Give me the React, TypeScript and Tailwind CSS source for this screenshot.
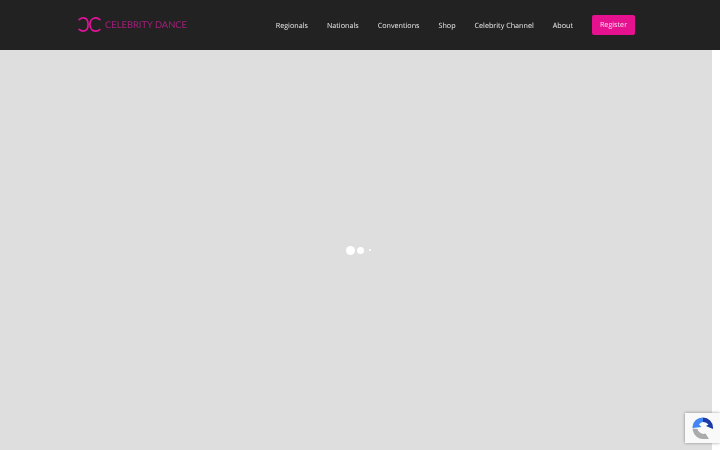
import React from 'react';

const navItems = ['Regionals', 'Nationals', 'Conventions', 'Shop', 'Celebrity Channel', 'About'];

const LogoMark = () => (
    <svg width="25" height="15" viewBox="0 0 25 16" fill="none" stroke="#e0149a" strokeWidth="1.8" strokeLinecap="round">
        <path d="M1.5 2.8C3 1.500 4.600.9 6 1c2.900.2 5 3 5 7s-2.100 6.800-5 7c-1.400.1-3-.5-4.500-1.800" />
        <path d="M23.500 2.800C22 1.500 20.400.8 18.800.9 15.400 1.100 13 4 13 8s2.400 6.900 5.800 7.100c1.600.1 3.200-.5 4.700-1.700" />
    </svg>
);

// reCAPTCHA mark: three arrows round a ring
const RecaptchaIcon = () => (
    <svg width="22" height="24" viewBox="0 0 22 24" fill="none">
        <path d="M11 1.500A10 10 0 0 1 21 11.500L21 13 14 10 16.500 8.500A6.500 6.500 0 0 0 11 6Z" fill="#1c3aa9" />
        <path d="M.5 11A10 10 0 0 1 11 1.500L11 6A6.500 6.500 0 0 0 7 8.500L9.500 11 .5 12Z" fill="#4285f4" />
        <path d="M.5 12.500L1 15A10 10 0 0 0 11 23L17 23 13.500 17.500A6 6 0 0 1 5.500 13Z" fill="#ababab" />
    </svg>
);

const App: React.FC = () => {
    return (
        <div className="relative flex h-[450px] w-[720px] flex-col overflow-hidden bg-white font-['Open_Sans',sans-serif] antialiased [text-rendering:geometricPrecision]">
            <header className="flex h-[50px] shrink-0 items-center justify-between bg-[#222222] pl-[77px] pr-[85px] will-change-transform">
                <div className="flex items-center gap-[3px]">
                    <LogoMark />
                    <span className="pt-[2px] font-['Lato',sans-serif] text-[9.4px] whitespace-nowrap text-[#a3207a]">
                        CELEBRITY DANCE
                    </span>
                </div>
                <nav className="flex items-center gap-[19px]">
                    {navItems.map((item) => (
                        <span key={item} className="pt-[2px] text-[7.2px] whitespace-nowrap text-[#ebebeb]">
                            {item}
                        </span>
                    ))}
                    <span className="flex h-[20px] w-[43px] items-center justify-center rounded-[2px] bg-[#e5118f] pt-[1px] text-[7.2px] text-[#fbdcee]">
                        Register
                    </span>
                </nav>
            </header>

            <div className="flex flex-1">
                <main className="flex flex-1 items-center justify-center bg-[#dedede]">
                    <div className="flex items-center gap-[2px] pl-[4px] blur-[0.4px]">
                        <span className="h-[9px] w-[9px] rounded-full bg-white" />
                        <span className="h-[7px] w-[7px] rounded-full bg-white" />
                        <span className="ml-[3px] h-[2px] w-[2px] rounded-full bg-white" />
                    </div>
                </main>
                <div className="w-2 bg-white" />
            </div>

            <div className="absolute left-[685px] top-[413px] flex h-[30px] w-[35px] items-center justify-start bg-[#f9f9f9] pl-[7px] shadow-[0_0_3px_rgba(0,0,0,0.4)]">
                <RecaptchaIcon />
            </div>
        </div>
    );
};

export default App;
